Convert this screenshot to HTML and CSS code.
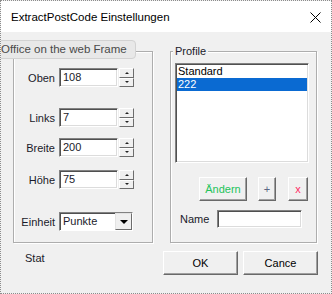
FILE: index.html
```html
<!DOCTYPE html>
<html lang="de">
<head>
  <meta charset="UTF-8">
  <title>ExtractPostCode Einstellungen</title>
  <link rel="stylesheet" href="styles.css">
</head>
<body>
  <div class="window">
    <div class="titlebar">
      <span class="title">ExtractPostCode Einstellungen</span>
      <svg class="close" width="11" height="11" viewBox="0 0 11 11">
        <path d="M0.5 0.5 L10.5 10.5 M10.5 0.5 L0.5 10.5" stroke="#000" stroke-width="1" fill="none"/>
      </svg>
    </div>

    <div class="client">
      <div class="panels">
        <!-- Position -->
        <div class="frame frame-pos">
          <div class="row row-oben">
            <label>Oben</label>
            <div class="textbox">108</div>
            <div class="spin"><span class="spin-up"></span><span class="spin-down"></span></div>
          </div>
          <div class="row row-links">
            <label>Links</label>
            <div class="textbox">7</div>
            <div class="spin"><span class="spin-up"></span><span class="spin-down"></span></div>
          </div>
          <div class="row row-breite">
            <label>Breite</label>
            <div class="textbox">200</div>
            <div class="spin"><span class="spin-up"></span><span class="spin-down"></span></div>
          </div>
          <div class="row row-hoehe">
            <label>Höhe</label>
            <div class="textbox">75</div>
            <div class="spin"><span class="spin-up"></span><span class="spin-down"></span></div>
          </div>
          <div class="row row-einheit">
            <label>Einheit</label>
            <div class="combo">
              <span class="combo-value">Punkte</span>
              <span class="combo-btn"></span>
            </div>
          </div>
        </div>

        <!-- Profile -->
        <div class="frame frame-profile">
          <div class="frame-title">Profile</div>
          <div class="listbox">
            <div class="item">Standard</div>
            <div class="item selected">222</div>
          </div>
          <div class="profile-buttons">
            <button class="btn btn-change">Ändern</button>
            <button class="btn btn-add">+</button>
            <button class="btn btn-del">x</button>
          </div>
          <div class="name-row">
            <label>Name</label>
            <div class="textbox name-box"></div>
          </div>
        </div>
      </div>

      <div class="footer">
        <span class="status">Stat</span>
        <div class="dialog-buttons">
          <button class="btn btn-dialog">OK</button>
          <button class="btn btn-dialog">Cance</button>
        </div>
      </div>
    </div>

    <div class="tooltip">Office on the web Frame</div>
  </div>
</body>
</html>
```

FILE: styles.css
```css
/* General Styles */
* {
  margin: 0;
  padding: 0;
  box-sizing: border-box;
}

body {
  font-family: 'Liberation Sans', Arial, sans-serif;
  font-size: 11px;
  color: #1a1a2a;
  background: #fff;
}

.window {
  position: relative;
  width: 332px;
  height: 294px;
  border: 1px dotted #8c8c8c;
  background: #f0f0f0;
  overflow: hidden;
}

/* Title bar */
.titlebar {
  height: 31px;
  background: #fff;
  display: flex;
  align-items: center;
  padding: 1px 0 0 10px;
}

.title {
  font-size: 11.5px;
  color: #000;
  flex: 1;
}

.close {
  margin-right: 10px;
  margin-top: 1px;
}

/* Client area */
.client {
  height: 261px;
  display: flex;
  flex-direction: column;
}

.panels {
  display: flex;
  gap: 17px;
  padding: 19px 0 0 12px;
}

.frame {
  height: 192px;
  border: 1px solid #adadad;
  box-shadow: inset 1px 1px 0 #fff, 1px 1px 0 #fff;
  display: flex;
  flex-direction: column;
}

.frame-pos {
  width: 140px;
  padding-top: 16px;
}

.frame-profile {
  width: 147px;
}

.frame-title {
  align-self: flex-start;
  margin: -7px 0 0 2px;
  padding: 0 2px;
  line-height: 13px;
  background: #f0f0f0;
}

/* Rows with spinner */
.row {
  display: flex;
  align-items: center;
  height: 19px;
}

.row label {
  width: 41px;
  text-align: right;
  margin-right: 4px;
}

.row-links { margin-top: 21px; }
.row-breite { margin-top: 11px; }
.row-hoehe { margin-top: 13px; }
.row-einheit { margin-top: 23px; }

.textbox {
  width: 59px;
  height: 19px;
  background: #fff;
  border: 1px solid;
  border-color: #828282 #fff #fff #828282;
  box-shadow: inset 1px 1px 0 #505050, inset -1px -1px 0 #dcdcdc;
  padding: 0 3px;
  line-height: 17px;
}

.spin {
  width: 15px;
  height: 19px;
  margin-left: 1px;
  display: flex;
  flex-direction: column;
}

.spin span {
  flex: 1;
  display: flex;
  align-items: center;
  justify-content: center;
  background: #f0f0f0;
  border: 1px solid;
  border-color: #fff #6d6d6d #6d6d6d #fff;
}

.spin-up::after {
  content: "";
  border-left: 2px solid transparent;
  border-right: 2px solid transparent;
  border-bottom: 2px solid #222;
}

.spin-down::after {
  content: "";
  border-left: 2px solid transparent;
  border-right: 2px solid transparent;
  border-top: 2px solid #222;
}

/* Combo box */
.combo {
  width: 74px;
  height: 19px;
  display: flex;
  background: #fff;
  border: 1px solid;
  border-color: #828282 #fff #fff #828282;
  box-shadow: inset 1px 1px 0 #505050;
}

.combo-value {
  flex: 1;
  padding-left: 3px;
  line-height: 17px;
}

.combo-btn {
  width: 17px;
  display: flex;
  align-items: center;
  justify-content: center;
  background: #f0f0f0;
  border: 1px solid;
  border-color: #e3e3e3 #6d6d6d #6d6d6d #e3e3e3;
}

.combo-btn::after {
  content: "";
  border-left: 4px solid transparent;
  border-right: 4px solid transparent;
  border-top: 4px solid #000;
}

/* List box */
.listbox {
  margin: 5px 0 0 4px;
  width: 134px;
  height: 100px;
  background: #fff;
  border: 1px solid;
  border-color: #828282 #fff #fff #828282;
  box-shadow: inset 1px 1px 0 #505050, inset -1px -1px 0 #dcdcdc;
  padding: 1px 1px 0 1px;
}

.item {
  height: 13px;
  line-height: 13px;
  padding-left: 1px;
  color: #000;
}

.item.selected {
  background: #0a6ad2;
  color: #fff;
}

/* Buttons */
.btn {
  font-family: inherit;
  font-size: 11px;
  background: #f0f0f0;
  border: 1px solid;
  border-color: #fff #696969 #696969 #fff;
  box-shadow: inset -1px -1px 0 #a0a0a0;
  color: #000;
}

.profile-buttons {
  display: flex;
  margin: 14px 0 0 28px;
  height: 24px;
}

.btn-change {
  width: 48px;
  color: #22c35a;
}

.btn-add {
  width: 18px;
  margin-left: 11px;
  color: #5a6683;
}

.btn-del {
  width: 20px;
  margin-left: 12px;
  color: #ff2d63;
}

.name-row {
  display: flex;
  align-items: center;
  margin: 9px 0 0 9px;
}

.name-row label {
  width: 37px;
}

.name-box {
  width: 85px;
  height: 18px;
}

/* Footer */
.footer {
  display: flex;
  padding: 8px 13px 0 24px;
}

.status {
  line-height: 13px;
  margin-top: 1px;
}

.dialog-buttons {
  margin-left: auto;
  display: flex;
  gap: 5px;
}

.btn-dialog {
  width: 75px;
  height: 24px;
}

/* Tooltip over the frame caption */
.tooltip {
  position: absolute;
  left: -4px;
  top: 39px;
  width: 139px;
  height: 19px;
  padding-left: 3px;
  font-size: 11.5px;
  line-height: 17px;
  color: #4a4a4a;
  background: #e8e8e8;
  border: 1px solid #d2d2d2;
  border-radius: 4px;
}
```
